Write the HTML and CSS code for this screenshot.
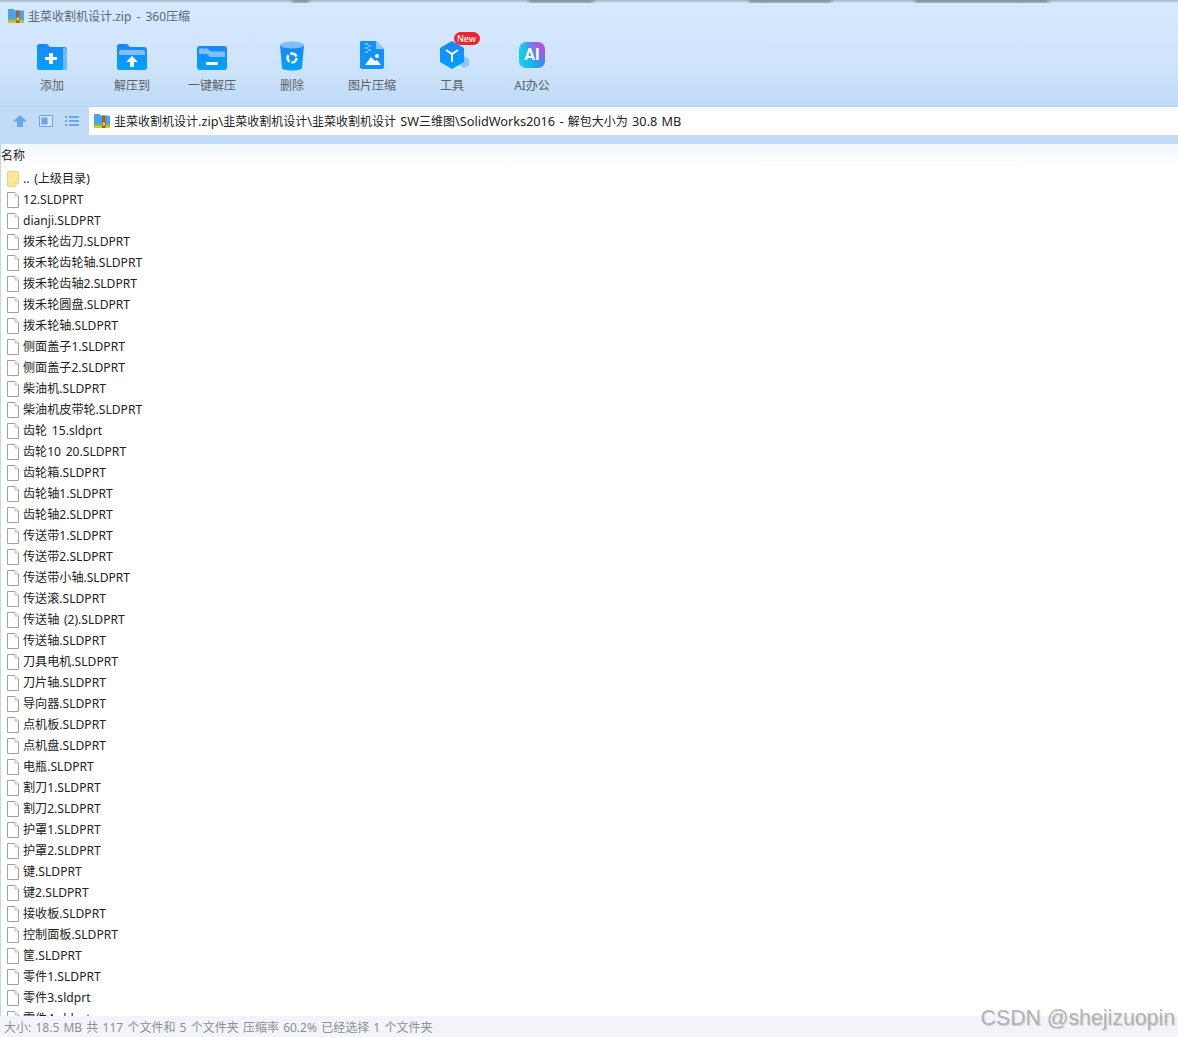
FILE: index.html
```html
<!DOCTYPE html>
<html lang="zh-CN">
<head>
<meta charset="utf-8">
<title>韭菜收割机设计.zip - 360压缩</title>
<link rel="stylesheet" href="styles.css">
</head>
<body>
<svg class="defs" width="0" height="0" aria-hidden="true">
  <defs>
    <linearGradient id="blue" x1="0" y1="0" x2="0" y2="1"><stop offset="0" stop-color="#1a86f8"/><stop offset="1" stop-color="#00a2ff"/></linearGradient>
    <symbol id="zip" viewBox="0 0 16 16">
      <path d="M0 2C0 1.500 .4 1 1 1h4.500l1.500 1.500H15c.6 0 1 .4 1 1V11H0z" fill="#45a5ee"/>
      <rect y="11" width="16" height="2.500" fill="#84c03a"/>
      <rect y="13.500" width="16" height="1.500" fill="#efb030"/>
      <rect x="8" y="2.500" width="3.500" height="12.500" fill="#a8641c"/>
      <rect x="8.700" y="9.500" width="2.100" height="3" fill="#f6d66a"/>
    </symbol>
    <symbol id="file" viewBox="0 0 12 16">
      <path d="M.5.500h7.500l3.500 3.500v11.500H.5z" fill="#fff" stroke="#a0a0a0"/>
      <path d="M8 .500v3.500h3.500" fill="#f2f2f2" stroke="#c0c0c0"/>
    </symbol>
    <symbol id="up-folder" viewBox="0 0 12 16">
      <path d="M.5 1.500c0-.6.4-1 1-1h9c.6 0 1 .4 1 1v10.500l-3.500 3.500h-6.500c-.6 0-1-.4-1-1z" fill="#fde79a" stroke="#ecd27e"/>
      <path d="M8 15.500v-3.500h3.500" fill="#fff3c4" stroke="#ecd27e"/>
    </symbol>
  </defs>
</svg>
<div class="app">
  <div class="top-shadow"></div>
  <header class="title-bar">
    <svg class="zip-icon"><use href="#zip"/></svg>
    <span>韭菜收割机设计.zip - 360压缩</span>
  </header>
  <nav class="toolbar">
    <div class="tool">
      <svg class="tool-icon" viewBox="0 0 32 28"><path d="M1 3c0-1 1-2 2-2h8l3 3h14c2 0 3 1 3 3v18c0 1-1 2-2 2H3c-1 0-2-1-2-2z" fill="url(#blue)"/><path d="M27 5h2c1 0 2 1 2 2v19c0 1-1 1-2 1h-2z" fill="#70b8fb"/><path d="M13 10h4v4h4v3h-4v4h-4v-4H9v-3h4z" fill="#fff"/></svg>
      <span>添加</span>
    </div>
    <div class="tool">
      <svg class="tool-icon" viewBox="0 0 32 28"><path d="M1 3c0-1 1-2 2-2h8l3 3h14c2 0 3 1 3 3v18c0 1-1 2-2 2H3c-1 0-2-1-2-2z" fill="url(#blue)"/><path d="M3 12V9c0-1 .5-2 2-2h22c1 0 2 1 2 2v3z" fill="#7fc0fb"/><path d="M16 13l6 6h-4v5h-4v-5h-4z" fill="#fff"/></svg>
      <span>解压到</span>
    </div>
    <div class="tool">
      <svg class="tool-icon" viewBox="0 0 32 28"><rect x="1" y="3" width="30" height="24" rx="3" fill="url(#blue)"/><path d="M3 7c0-1 .5-1.500 1.500-1.500h7l3 3H29V14H14l-3-3H3z" fill="#7fc0fb"/><rect x="10" y="19" width="12" height="3" fill="#fff"/></svg>
      <span>一键解压</span>
    </div>
    <div class="tool">
      <svg class="tool-icon bin" viewBox="0 0 24 30"><path d="M0 4l2 23c0 1.500 5 2.500 10 2.500s10-1 10-2.500l2-23z" fill="url(#blue)"/><ellipse cx="12" cy="4" rx="12" ry="3.500" fill="#7fc0fb"/><circle cx="12" cy="17" r="4.500" fill="none" stroke="#fff" stroke-width="2.500" stroke-dasharray="7.400 2"/></svg>
      <span>删除</span>
    </div>
    <div class="tool">
      <svg class="tool-icon pic" viewBox="0 0 24 28"><path d="M1 0h15l8 8v18c0 1-1 2-2 2H2c-1 0-2-1-2-2V1c0-.5.500-1 1-1z" fill="#0f92fb"/><path d="M16 0l8 8h-8z" fill="#8cc8fb"/><path d="M5 2h3v2H5zM8 4h3v2H8zM5 6h3v2H5zM8 8h3v2H8zM5 10h3v2H5z" fill="#6dbbfa"/><circle cx="17" cy="15" r="2" fill="#fff"/><path d="M5 24l6-8 4 4 2-1 4 5z" fill="#fff"/></svg>
      <span>图片压缩</span>
    </div>
    <div class="tool">
      <span class="tool-icon-wrap">
        <svg class="tool-icon hex" viewBox="0 0 30 28"><path d="M24 15l5 3v6l-5 3-5-3v-6z" fill="#8cc4fb"/><path d="M12 0l12 7v14l-12 7-12-7V7z" fill="url(#blue)"/><path d="M6 9l6 4 6-4M12 13v8" fill="none" stroke="#fff" stroke-width="2"/></svg>
        <b class="badge">New</b>
      </span>
      <span>工具</span>
    </div>
    <div class="tool">
      <span class="ai-icon">AI</span>
      <span>AI办公</span>
    </div>
  </nav>
  <div class="address-row">
    <div class="nav-icons">
      <svg class="nav-icon" viewBox="0 0 14 14"><path d="M7 1l7 6.500H10V13H4V7.500H0z" fill="#6ba6ea"/></svg>
      <svg class="nav-icon" viewBox="0 0 14 14"><path d="M.5 1.500h13v11H.5z" fill="#d5e6fa" stroke="#6ba6ea"/><rect x="2.500" y="3.500" width="6" height="7" fill="#6ba6ea"/></svg>
      <svg class="nav-icon" viewBox="0 0 14 14"><path d="M0 2h2v2H0zM4 2h10v2H4zM0 6h2v2H0zM4 6h10v2H4zM0 10h2v2H0zM4 10h10v2H4z" fill="#6ba6ea"/></svg>
    </div>
    <div class="address">
      <svg class="zip-icon"><use href="#zip"/></svg>
      <span>韭菜收割机设计<span class="latin">.zip\</span>韭菜收割机设计<span class="latin">\</span>韭菜收割机设计<span class="latin"> SW</span>三维图<span class="latin">\SolidWorks2016 - </span>解包大小为<span class="latin"> 30.8 MB</span></span>
    </div>
  </div>
  <main class="list-pane">
    <div class="list-head">名称</div>
    <ul class="files">
      <li><svg class="file"><use href="#up-folder"/></svg>.. (上级目录)</li>
      <li><svg class="file"><use href="#file"/></svg>12.SLDPRT</li>
      <li><svg class="file"><use href="#file"/></svg>dianji.SLDPRT</li>
      <li><svg class="file"><use href="#file"/></svg>拨禾轮齿刀.SLDPRT</li>
      <li><svg class="file"><use href="#file"/></svg>拨禾轮齿轮轴.SLDPRT</li>
      <li><svg class="file"><use href="#file"/></svg>拨禾轮齿轴2.SLDPRT</li>
      <li><svg class="file"><use href="#file"/></svg>拨禾轮圆盘.SLDPRT</li>
      <li><svg class="file"><use href="#file"/></svg>拨禾轮轴.SLDPRT</li>
      <li><svg class="file"><use href="#file"/></svg>侧面盖子1.SLDPRT</li>
      <li><svg class="file"><use href="#file"/></svg>侧面盖子2.SLDPRT</li>
      <li><svg class="file"><use href="#file"/></svg>柴油机.SLDPRT</li>
      <li><svg class="file"><use href="#file"/></svg>柴油机皮带轮.SLDPRT</li>
      <li><svg class="file"><use href="#file"/></svg>齿轮 15.sldprt</li>
      <li><svg class="file"><use href="#file"/></svg>齿轮10 20.SLDPRT</li>
      <li><svg class="file"><use href="#file"/></svg>齿轮箱.SLDPRT</li>
      <li><svg class="file"><use href="#file"/></svg>齿轮轴1.SLDPRT</li>
      <li><svg class="file"><use href="#file"/></svg>齿轮轴2.SLDPRT</li>
      <li><svg class="file"><use href="#file"/></svg>传送带1.SLDPRT</li>
      <li><svg class="file"><use href="#file"/></svg>传送带2.SLDPRT</li>
      <li><svg class="file"><use href="#file"/></svg>传送带小轴.SLDPRT</li>
      <li><svg class="file"><use href="#file"/></svg>传送滚.SLDPRT</li>
      <li><svg class="file"><use href="#file"/></svg>传送轴 (2).SLDPRT</li>
      <li><svg class="file"><use href="#file"/></svg>传送轴.SLDPRT</li>
      <li><svg class="file"><use href="#file"/></svg>刀具电机.SLDPRT</li>
      <li><svg class="file"><use href="#file"/></svg>刀片轴.SLDPRT</li>
      <li><svg class="file"><use href="#file"/></svg>导向器.SLDPRT</li>
      <li><svg class="file"><use href="#file"/></svg>点机板.SLDPRT</li>
      <li><svg class="file"><use href="#file"/></svg>点机盘.SLDPRT</li>
      <li><svg class="file"><use href="#file"/></svg>电瓶.SLDPRT</li>
      <li><svg class="file"><use href="#file"/></svg>割刀1.SLDPRT</li>
      <li><svg class="file"><use href="#file"/></svg>割刀2.SLDPRT</li>
      <li><svg class="file"><use href="#file"/></svg>护罩1.SLDPRT</li>
      <li><svg class="file"><use href="#file"/></svg>护罩2.SLDPRT</li>
      <li><svg class="file"><use href="#file"/></svg>键.SLDPRT</li>
      <li><svg class="file"><use href="#file"/></svg>键2.SLDPRT</li>
      <li><svg class="file"><use href="#file"/></svg>接收板.SLDPRT</li>
      <li><svg class="file"><use href="#file"/></svg>控制面板.SLDPRT</li>
      <li><svg class="file"><use href="#file"/></svg>筐.SLDPRT</li>
      <li><svg class="file"><use href="#file"/></svg>零件1.SLDPRT</li>
      <li><svg class="file"><use href="#file"/></svg>零件3.sldprt</li>
      <li><svg class="file"><use href="#file"/></svg>零件4.sldprt</li>
    </ul>
  </main>
  <footer class="status">大小: 18.5 MB 共 117 个文件和 5 个文件夹 压缩率 60.2% 已经选择 1 个文件夹</footer>
  <div class="watermark">CSDN @shejizuopin</div>
</div>
</body>
</html>
```
FILE: styles.css
```css
* { box-sizing: border-box; }
html, body { margin: 0; height: 100%; overflow: hidden; }
body {
  font-family: "Noto Sans", "Noto Sans CJK SC", sans-serif;
  font-size: 12px;
  color: #222;
  background: #fff;
}
.defs { position: absolute; }
.app {
  position: relative;
  height: 1037px;
  display: flex;
  flex-direction: column;
  background: linear-gradient(#d5e9fe 0, #d0e5fc 60px, #c0dbf6 106px);
}
.top-shadow {
  height: 3px;
  flex: none;
  background:
    linear-gradient(to right,
      transparent 289px, rgba(60, 70, 80, .35) 295px, rgba(60, 70, 80, .35) 306px, transparent 312px,
      transparent 526px, rgba(60, 70, 80, .35) 532px, rgba(60, 70, 80, .35) 591px, transparent 597px,
      transparent 746px, rgba(60, 70, 80, .35) 752px, rgba(60, 70, 80, .35) 828px, transparent 834px,
      transparent 912px, rgba(60, 70, 80, .35) 918px, rgba(60, 70, 80, .35) 1046px, transparent 1052px),
    linear-gradient(#a5b1bc, #d5e9fe);
}
.title-bar {
  height: 27px;
  flex: none;
  display: flex;
  align-items: center;
  gap: 4px;
  padding: 0 8px 2px;
  color: #5c6773;
  word-spacing: 2px;
}
.zip-icon { width: 16px; height: 16px; flex: none; }
.toolbar {
  height: 76px;
  flex: none;
  display: flex;
  padding: 11px 12px 0;
}
.tool {
  width: 80px;
  display: flex;
  flex-direction: column;
  align-items: center;
  color: #5a6068;
  line-height: 16px;
}
.tool-icon { width: 32px; height: 28px; margin: 2px 0 7px; display: block; }
.tool-icon.bin { width: 24px; height: 30px; margin: 0 0 7px; }
.tool-icon.pic { width: 24px; height: 28px; margin: 0 0 9px; }
.tool-icon.hex { width: 30px; height: 28px; margin: 0 0 9px; }
.tool-icon-wrap { position: relative; display: block; padding-left: 5px; }
.badge {
  position: absolute;
  left: 19px;
  top: -9px;
  width: 26px;
  height: 13px;
  border-radius: 7px;
  background: #f5212d;
  color: #fff;
  font-size: 9px;
  font-weight: 500;
  line-height: 13px;
  text-align: center;
}
.ai-icon {
  width: 26px;
  height: 26px;
  margin: 1px 0 10px;
  border-radius: 7px;
  background:
    radial-gradient(circle at 100% 0, #e83ad8, transparent 65%),
    linear-gradient(90deg, #12d6e8, #2a8cf0);
  color: #fff;
  font: 700 16px/26px Roboto, sans-serif;
  text-align: center;
}
.address-row {
  height: 38px;
  flex: none;
  display: flex;
  align-items: flex-start;
  padding-top: 1px;
  background: #c2dcf8;
  box-shadow: inset 0 1px 0 #b6d3f2;
}
.nav-icons {
  width: 89px;
  flex: none;
  height: 28px;
  display: flex;
  align-items: center;
  gap: 12px;
  padding-left: 13px;
}
.nav-icon { width: 14px; height: 14px; flex: none; }
.address {
  flex: 1;
  height: 28px;
  background: #fff;
  display: flex;
  align-items: center;
  gap: 4px;
  padding-left: 5px;
  color: #222;
  white-space: pre;
}
.latin { font-size: 12.700px; word-spacing: 1px; }
.list-pane {
  flex: 1;
  min-height: 0;
  overflow: hidden;
  background: #fff;
  border-left: 1px solid #bcd8f6;
}
.list-head {
  height: 24px;
  line-height: 23px;
  background: linear-gradient(#f1f7fe, #fff);
}
.files { list-style: none; margin: 0; padding: 0 0 0 6px; }
.files li {
  height: 21px;
  line-height: 20px;
  display: flex;
  align-items: center;
  gap: 4px;
  white-space: pre;
  font-size: 12.100px;
  word-spacing: 1.500px;
}
.file { width: 12px; height: 16px; flex: none; }
.status {
  height: 21px;
  flex: none;
  padding-left: 4px;
  line-height: 23px;
  color: #8c9097;
  background: #f2f4f9;
  word-spacing: 1.100px;
}
.watermark {
  position: absolute;
  right: 3px;
  bottom: 6px;
  font: 21.300px "Liberation Sans", sans-serif;
  color: rgba(150, 150, 150, .65);
  text-shadow: 1px 1px 1px rgba(120, 120, 120, .25);
}
```
